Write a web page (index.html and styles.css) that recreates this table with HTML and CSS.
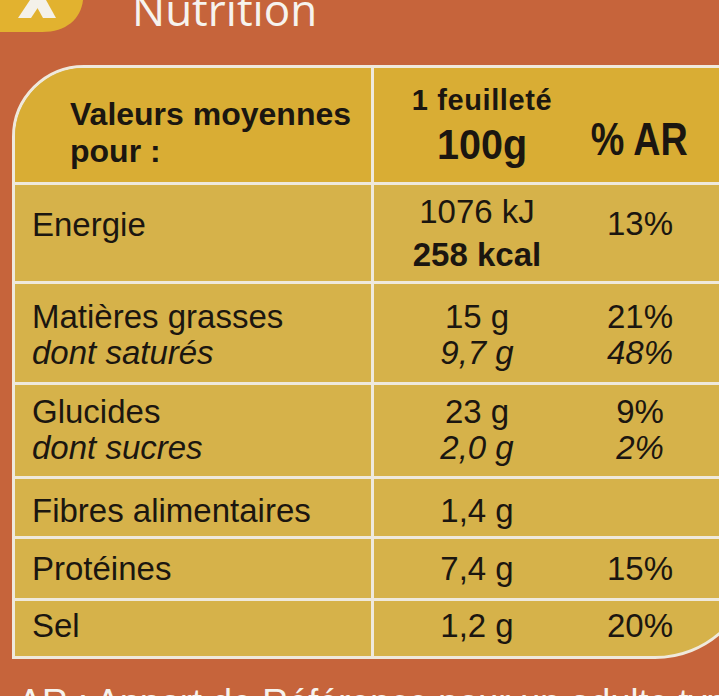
FILE: index.html
```html
<!DOCTYPE html>
<html lang="fr">
<head>
<meta charset="utf-8">
<title>Nutrition</title>
<link rel="stylesheet" href="styles.css">
</head>
<body>
<div class="page">
  <header class="top">
    <svg class="logo" width="86" height="34" viewBox="0 0 86 34" aria-hidden="true">
      <path d="M0 0 H83 C81 19 66 32 42 32 H0 Z" fill="#e2b22f"/>
      <polygon points="18,18 31,18 43,0 30,0" fill="#f4f1ea"/>
      <polygon points="43,18 56,18 46,0 33,0" fill="#f4f1ea"/>
    </svg>
    <h1 class="title">Nutrition</h1>
  </header>

  <div class="table">
    <div class="row head">
      <div class="cell label">Valeurs moyennes<br>pour :</div>
      <div class="cell val">
        <span class="portion">1 feuilleté</span>
        <span class="hundred">100g</span>
      </div>
      <div class="cell pct"><span class="ar">% AR</span></div>
      <div class="cell"></div>
    </div>

    <div class="row energy">
      <div class="cell label">Energie</div>
      <div class="cell val">1076 kJ<br><b class="kcal">258 kcal</b></div>
      <div class="cell pct">13%</div>
      <div class="cell"></div>
    </div>

    <div class="row fat">
      <div class="cell label">Matières grasses<br><i>dont saturés</i></div>
      <div class="cell val">15 g<br><i>9,7 g</i></div>
      <div class="cell pct">21%<br><i>48%</i></div>
      <div class="cell"></div>
    </div>

    <div class="row carbs">
      <div class="cell label">Glucides<br><i>dont sucres</i></div>
      <div class="cell val">23 g<br><i>2,0 g</i></div>
      <div class="cell pct">9%<br><i>2%</i></div>
      <div class="cell"></div>
    </div>

    <div class="row fibre">
      <div class="cell label">Fibres alimentaires</div>
      <div class="cell val">1,4 g</div>
      <div class="cell pct"></div>
      <div class="cell"></div>
    </div>

    <div class="row prot">
      <div class="cell label">Protéines</div>
      <div class="cell val">7,4 g</div>
      <div class="cell pct">15%</div>
      <div class="cell"></div>
    </div>

    <div class="row salt">
      <div class="cell label">Sel</div>
      <div class="cell val">1,2 g</div>
      <div class="cell pct">20%</div>
      <div class="cell"></div>
    </div>
  </div>

  <p class="foot">AR : Apport de Référence pour un adulte type</p>
</div>
</body>
</html>
```

FILE: styles.css
```css
html, body {
  margin: 0;
  padding: 0;
  width: 719px;
  height: 696px;
  overflow: hidden;
}

body {
  background: #c6643b;
  font-family: "Liberation Sans", Arial, sans-serif;
  color: #1b1610;
}

.page {
  width: 719px;
  height: 696px;
  overflow: hidden;
}

.top {
  display: flex;
  align-items: flex-start;
  height: 78px;
  margin-top: -13px;
}

.logo {
  display: block;
  margin-top: 13px;
  flex: none;
}

.title {
  margin: 0 0 0 46px;
  font-family: "Open Sans", "Liberation Sans", sans-serif;
  font-weight: 400;
  font-size: 44px;
  line-height: 44px;
  color: #f6f3ee;
}

.table {
  margin-left: 12px;
  width: 743px;
  box-sizing: border-box;
  border: 3px solid #efe9dc;
  border-radius: 72px 0 100px 0;
  overflow: hidden;
  background: #d6b24a;
}

.row {
  display: grid;
  grid-template-columns: 359px 206px 120px 1fr;
  box-sizing: border-box;
  border-top: 3px solid #efe9dc;
  font-size: 33px;
  line-height: 36px;
}

.row.head {
  border-top: 0;
  height: 114px;
  background: #d9ad34;
  font-weight: 700;
}

.cell {
  box-sizing: border-box;
  white-space: nowrap;
}

.label {
  border-right: 3px solid #efe9dc;
  padding-left: 17px;
}

.val,
.pct {
  text-align: center;
}

.head .label {
  padding-left: 55px;
  padding-top: 28px;
  font-size: 32px;
  line-height: 37px;
}

.head .val {
  display: flex;
  flex-direction: column;
  align-items: center;
  padding-top: 17px;
  padding-left: 10px;
}

.portion {
  display: block;
  font-size: 29px;
  line-height: 30px;
  letter-spacing: 0.6px;
}

.hundred {
  display: inline-block;
  margin-top: 6px;
  font-size: 43px;
  line-height: 46px;
  transform: scaleX(0.92);
}

.head .pct {
  padding-top: 46px;
  padding-right: 18px;
}

.ar {
  display: inline-block;
  font-size: 46px;
  line-height: 50px;
  transform: scaleX(0.82);
}

.energy { height: 99px; }
.energy .label { padding-top: 22px; }
.energy .val { padding-top: 9px; }
.energy .pct { padding-top: 21px; }
.kcal {
  display: inline-block;
  margin-top: 7px;
  font-weight: 700;
}

.fat { height: 101px; }
.fat .cell { padding-top: 15px; }

.carbs { height: 94px; }
.carbs .cell { padding-top: 9px; }

.fibre { height: 60px; }
.fibre .cell { padding-top: 14px; }

.prot { height: 62px; }
.prot .cell { padding-top: 12px; }

.salt { height: 58px; }
.salt .cell { padding-top: 7px; }

i {
  font-style: italic;
}

.foot {
  margin: 24px 0 0 18px;
  font-size: 36px;
  line-height: 40px;
  color: #f6f3ee;
  white-space: nowrap;
}
```
